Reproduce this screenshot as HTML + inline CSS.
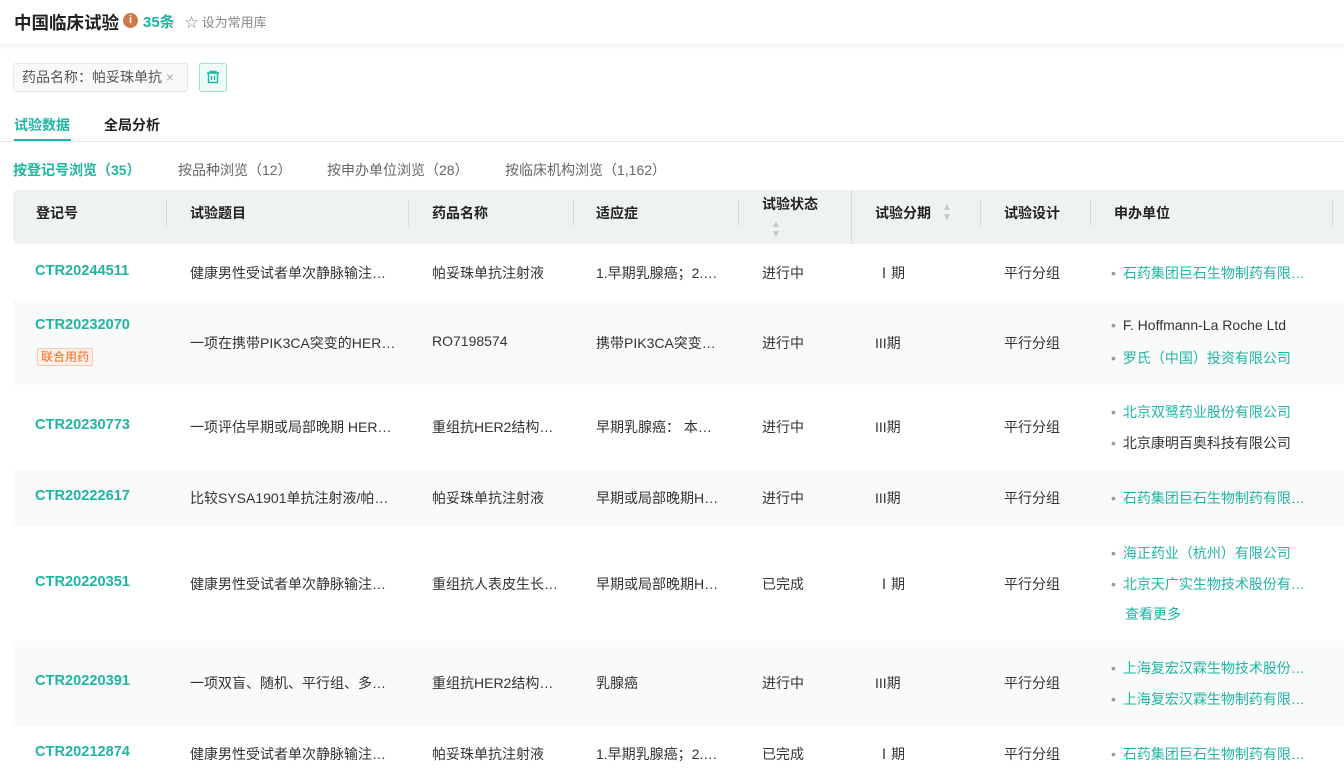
<!DOCTYPE html>
<html><head><meta charset="utf-8"><style>
*{margin:0;padding:0;box-sizing:border-box}
body{width:1344px;height:777px;overflow:hidden;background:#fff;font-family:"Liberation Sans","Noto Sans CJK SC",sans-serif;color:#333;font-size:14px;position:relative}
.a{position:absolute;white-space:nowrap}
.t{color:#20b5a3}
.top{position:absolute;left:0;top:0;width:1344px;height:44px;background:#fff;box-shadow:0 2px 5px rgba(0,0,0,.07)}
.hdr{position:absolute;left:13px;top:190px;width:1331px;height:54px;background:#eff2f3;border-radius:4px 0 0 4px}
.sep{position:absolute;width:1px;background:#d6dcde;top:200px;height:26px}
.row{position:absolute;left:13px;width:1331px}
.s{background:#f9fafa}
.id{font-weight:bold;color:#20b5a3;font-size:14.6px}
.dot{color:#999;margin-right:7px}
.ar{color:#c4c8cc;font-size:10px;line-height:10px}
</style></head><body>
<div class="top"></div>
<div class="a" style="left:14px;top:10px;font-size:17.5px;font-weight:bold;color:#222">中国临床试验</div>
<div class="a" style="left:123px;top:13px;width:15px;height:15px;border-radius:50%;background:#d07a4a;color:#fff;font-size:11px;font-weight:bold;text-align:center;line-height:15px">i</div>
<div class="a t" style="left:143px;top:11px;font-size:15px;font-weight:bold">35条</div>
<div class="a" style="left:185px;top:12px;font-size:13px;color:#888">☆ 设为常用库</div>
<div class="a" style="left:13px;top:63px;width:175px;height:29px;border:1px solid #e4e6e8;background:#f8f9fa;border-radius:3px;font-size:14px;color:#555;line-height:27px;padding-left:8px">药品名称：帕妥珠单抗 <span style="color:#aaa">×</span></div>
<div class="a" style="left:199px;top:63px;width:28px;height:29px;border:1px solid #9edfd6;background:#eefaf8;border-radius:3px">
<svg width="26" height="27" viewBox="0 0 26 27"><g fill="none" stroke="#20b5a3" stroke-width="1.4"><path d="M7 9h12M10 9V7.5h6V9M8.5 9.5v9h9v-9M11.5 12v4M14.5 12v4"/></g></svg></div>
<div class="a t" style="left:14px;top:115px;font-weight:bold;font-size:14px">试验数据</div>
<div class="a" style="left:14px;top:139px;width:57px;height:3px;background:#20b5a3"></div>
<div class="a" style="left:104px;top:115px;font-weight:bold;color:#222">全局分析</div>
<div class="a" style="left:0;top:141px;width:1344px;height:1px;background:#e6e8ea"></div>
<div class="a t" style="left:13px;top:160px;font-weight:bold">按登记号浏览（35）</div>
<div class="a" style="left:178px;top:160px;color:#666">按品种浏览（12）</div>
<div class="a" style="left:327px;top:160px;color:#666">按申办单位浏览（28）</div>
<div class="a" style="left:505px;top:160px;color:#666">按临床机构浏览（1,162）</div>
<div class="hdr"></div>
<div class="a" style="left:851px;top:190px;width:1px;height:54px;background:#d6dcde"></div>
<div class="sep" style="left:166px"></div><div class="sep" style="left:408px"></div><div class="sep" style="left:573px"></div><div class="sep" style="left:738px"></div><div class="sep" style="left:980px"></div><div class="sep" style="left:1090px"></div><div class="sep" style="left:1332px"></div>
<div style="font-weight:bold;color:#222">
<div class="a" style="left:36px;top:203px">登记号</div>
<div class="a" style="left:190px;top:203px">试验题目</div>
<div class="a" style="left:432px;top:203px">药品名称</div>
<div class="a" style="left:596px;top:203px">适应症</div>
<div class="a" style="left:762px;top:194px">试验状态</div>
<div class="a ar" style="left:771px;top:220px">▲<br>▼</div>
<div class="a" style="left:875px;top:203px">试验分期</div>
<div class="a ar" style="left:942px;top:203px">▲<br>▼</div>
<div class="a" style="left:1004px;top:203px">试验设计</div>
<div class="a" style="left:1114px;top:203px">申办单位</div>
</div>
<div class="row s" style="top:300px;height:85px"></div>
<div class="row s" style="top:470px;height:56px"></div>
<div class="row s" style="top:641px;height:85px"></div>

<div class="a id" style="left:35px;top:263px">CTR20244511</div>
<div class="a" style="left:190px;top:263px">健康男性受试者单次静脉输注…</div>
<div class="a" style="left:432px;top:263px">帕妥珠单抗注射液</div>
<div class="a" style="left:596px;top:263px">1.早期乳腺癌；2.…</div>
<div class="a" style="left:762px;top:263px">进行中</div>
<div class="a" style="left:877px;top:263px">Ⅰ期</div>
<div class="a" style="left:1004px;top:263px">平行分组</div>
<div class="a t" style="left:1111px;top:263px"><span class="dot">•</span>石药集团巨石生物制药有限…</div>

<div class="a id" style="left:35px;top:317px">CTR20232070</div>
<div class="a" style="left:37px;top:348px;border:1px solid #f8c8b0;background:#fff1ea;color:#f26b22;font-size:12px;padding:0 3px;line-height:16px;border-radius:2px">联合用药</div>
<div class="a" style="left:190px;top:333px">一项在携带PIK3CA突变的HER…</div>
<div class="a" style="left:432px;top:333px">RO7198574</div>
<div class="a" style="left:596px;top:333px">携带PIK3CA突变…</div>
<div class="a" style="left:762px;top:333px">进行中</div>
<div class="a" style="left:875px;top:333px">III期</div>
<div class="a" style="left:1004px;top:333px">平行分组</div>
<div class="a" style="left:1111px;top:317px"><span class="dot">•</span>F. Hoffmann-La Roche Ltd</div>
<div class="a t" style="left:1111px;top:348px"><span class="dot">•</span>罗氏（中国）投资有限公司</div>

<div class="a id" style="left:35px;top:417px">CTR20230773</div>
<div class="a" style="left:190px;top:417px">一项评估早期或局部晚期 HER…</div>
<div class="a" style="left:432px;top:417px">重组抗HER2结构…</div>
<div class="a" style="left:596px;top:417px">早期乳腺癌： 本…</div>
<div class="a" style="left:762px;top:417px">进行中</div>
<div class="a" style="left:875px;top:417px">III期</div>
<div class="a" style="left:1004px;top:417px">平行分组</div>
<div class="a t" style="left:1111px;top:402px"><span class="dot">•</span>北京双鹭药业股份有限公司</div>
<div class="a" style="left:1111px;top:433px"><span class="dot">•</span>北京康明百奥科技有限公司</div>

<div class="a id" style="left:35px;top:488px">CTR20222617</div>
<div class="a" style="left:190px;top:488px">比较SYSA1901单抗注射液/帕…</div>
<div class="a" style="left:432px;top:488px">帕妥珠单抗注射液</div>
<div class="a" style="left:596px;top:488px">早期或局部晚期H…</div>
<div class="a" style="left:762px;top:488px">进行中</div>
<div class="a" style="left:875px;top:488px">III期</div>
<div class="a" style="left:1004px;top:488px">平行分组</div>
<div class="a t" style="left:1111px;top:488px"><span class="dot">•</span>石药集团巨石生物制药有限…</div>

<div class="a id" style="left:35px;top:574px">CTR20220351</div>
<div class="a" style="left:190px;top:574px">健康男性受试者单次静脉输注…</div>
<div class="a" style="left:432px;top:574px">重组抗人表皮生长…</div>
<div class="a" style="left:596px;top:574px">早期或局部晚期H…</div>
<div class="a" style="left:762px;top:574px">已完成</div>
<div class="a" style="left:877px;top:574px">Ⅰ期</div>
<div class="a" style="left:1004px;top:574px">平行分组</div>
<div class="a t" style="left:1111px;top:543px"><span class="dot">•</span>海正药业（杭州）有限公司</div>
<div class="a t" style="left:1111px;top:574px"><span class="dot">•</span>北京天广实生物技术股份有…</div>
<div class="a t" style="left:1125px;top:604px">查看更多</div>

<div class="a id" style="left:35px;top:673px">CTR20220391</div>
<div class="a" style="left:190px;top:673px">一项双盲、随机、平行组、多…</div>
<div class="a" style="left:432px;top:673px">重组抗HER2结构…</div>
<div class="a" style="left:596px;top:673px">乳腺癌</div>
<div class="a" style="left:762px;top:673px">进行中</div>
<div class="a" style="left:875px;top:673px">III期</div>
<div class="a" style="left:1004px;top:673px">平行分组</div>
<div class="a t" style="left:1111px;top:658px"><span class="dot">•</span>上海复宏汉霖生物技术股份…</div>
<div class="a t" style="left:1111px;top:689px"><span class="dot">•</span>上海复宏汉霖生物制药有限…</div>

<div class="a id" style="left:35px;top:744px">CTR20212874</div>
<div class="a" style="left:190px;top:744px">健康男性受试者单次静脉输注…</div>
<div class="a" style="left:432px;top:744px">帕妥珠单抗注射液</div>
<div class="a" style="left:596px;top:744px">1.早期乳腺癌；2.…</div>
<div class="a" style="left:762px;top:744px">已完成</div>
<div class="a" style="left:877px;top:744px">Ⅰ期</div>
<div class="a" style="left:1004px;top:744px">平行分组</div>
<div class="a t" style="left:1111px;top:744px"><span class="dot">•</span>石药集团巨石生物制药有限…</div>
</body></html>
